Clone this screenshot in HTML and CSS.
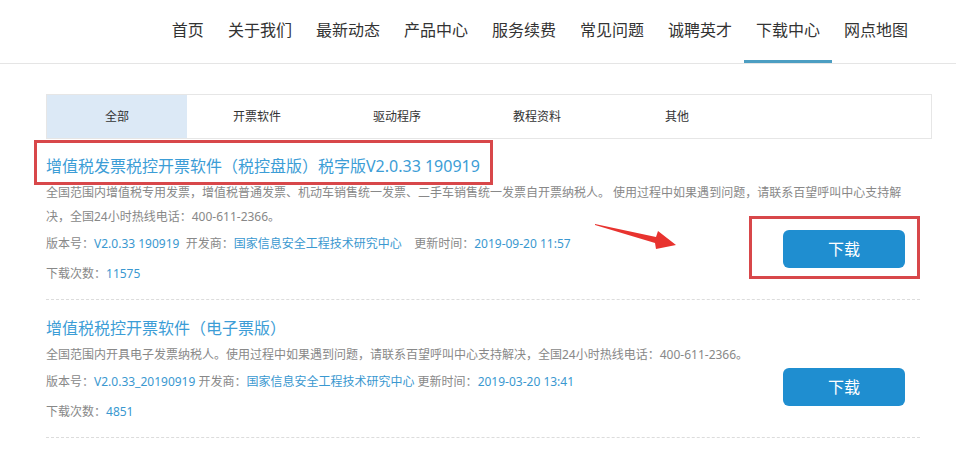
FILE: index.html
```html
<!DOCTYPE html>
<html lang="zh-CN">
<head>
    <meta charset="UTF-8">
    <meta name="viewport" content="width=device-width, initial-scale=1.0">
    <title>下载中心</title>
    <link rel="stylesheet" href="styles.css">
</head>
<body>
    <header class="top">
        <nav class="nav">
            <a class="nav-item">首页</a>
            <a class="nav-item">关于我们</a>
            <a class="nav-item">最新动态</a>
            <a class="nav-item">产品中心</a>
            <a class="nav-item">服务续费</a>
            <a class="nav-item">常见问题</a>
            <a class="nav-item">诚聘英才</a>
            <a class="nav-item active">下载中心</a>
            <a class="nav-item">网点地图</a>
        </nav>
    </header>

    <div class="container">
        <ul class="tabs">
            <li class="tab active">全部</li>
            <li class="tab">开票软件</li>
            <li class="tab">驱动程序</li>
            <li class="tab">教程资料</li>
            <li class="tab">其他</li>
        </ul>

        <div class="list">
            <div class="item">
                <h3 class="item-title">
                    <span class="title-text">增值税发票税控开票软件（税控盘版）税字版V2.0.33 190919<span class="mark mark-title"></span></span>
                </h3>
                <p class="desc">全国范围内增值税专用发票，增值税普通发票、机动车销售统一发票、二手车销售统一发票自开票纳税人。 使用过程中如果遇到问题，请联系百望呼叫中心支持解决，全国24小时热线电话：400-611-2366。</p>
                <div class="item-bottom">
                    <div class="meta">
                        <p class="meta-line">版本号：<em>V2.0.33 190919</em>&nbsp;&nbsp;开发商：<em>国家信息安全工程技术研究中心</em>&nbsp;&nbsp;&nbsp;&nbsp;更新时间：<em>2019-09-20 11:57</em></p>
                        <p class="meta-line count">下载次数：<em>11575</em></p>
                    </div>
                    <div class="action">
                        <a class="btn">下载</a>
                        <span class="mark mark-btn"></span>
                    </div>
                </div>
                <svg class="arrow" width="92" height="34" viewBox="0 0 92 34">
                    <polygon points="5,6 66,19 68,13 86,27 66,31 65,25 5,7" fill="#e8332f"/>
                </svg>
            </div>

            <div class="item">
                <h3 class="item-title">
                    <span class="title-text">增值税税控开票软件（电子票版）</span>
                </h3>
                <p class="desc">全国范围内开具电子发票纳税人。使用过程中如果遇到问题，请联系百望呼叫中心支持解决，全国24小时热线电话：400-611-2366。</p>
                <div class="item-bottom">
                    <div class="meta">
                        <p class="meta-line">版本号：<em>V2.0.33_20190919</em> 开发商：<em>国家信息安全工程技术研究中心</em> 更新时间：<em>2019-03-20 13:41</em></p>
                        <p class="meta-line count">下载次数：<em>4851</em></p>
                    </div>
                    <div class="action">
                        <a class="btn">下载</a>
                    </div>
                </div>
            </div>
        </div>
    </div>
</body>
</html>
```

FILE: styles.css
```css
* {
    margin: 0;
    padding: 0;
    box-sizing: border-box;
}
body {
    font-family: "Noto Sans", "Noto Sans CJK SC", sans-serif;
    background: #fff;
    color: #333;
}

/* header nav */
.top {
    border-bottom: 1px solid #e5e5e5;
}
.nav {
    display: flex;
    justify-content: flex-end;
    padding-right: 36px;
}
.nav-item {
    display: block;
    padding: 0 12px;
    font-size: 16px;
    line-height: 60px;
    color: #333;
    border-bottom: 3px solid transparent;
    cursor: pointer;
}
.nav-item.active {
    border-bottom-color: #4c9ec2;
}

.container {
    margin-left: 46px;
    width: 886px;
}

/* tabs */
.tabs {
    list-style: none;
    display: flex;
    margin-top: 30px;
    border: 1px solid #e6e6e6;
}
.tab {
    width: 140px;
    height: 43px;
    line-height: 43px;
    text-align: center;
    font-size: 12px;
    color: #333;
}
.tab.active {
    background: #dce9f6;
}

/* download list */
.list {
    margin-right: 12px;
}
.item {
    position: relative;
    padding-top: 12px;
    padding-bottom: 13px;
    border-bottom: 1px dashed #dcdcdc;
}
.item + .item {
    padding-top: 13px;
}
.item-title {
    font-size: 16px;
    font-weight: normal;
    line-height: 30px;
    color: #3c9dd6;
}
.title-text {
    position: relative;
    display: inline-block;
}
.desc {
    max-width: 862px;
    font-size: 12px;
    line-height: 24px;
    color: #888;
}
.item-bottom {
    display: flex;
    justify-content: space-between;
    align-items: flex-start;
    margin-top: 3px;
}
.meta-line {
    font-size: 12px;
    line-height: 24px;
    color: #888;
}
.meta-line em {
    font-style: normal;
    color: #3a98d0;
}
.meta-line.count {
    margin-top: 6px;
}
.action {
    position: relative;
    margin-top: -2px;
    margin-right: 15px;
}
.btn {
    display: block;
    width: 122px;
    height: 38px;
    line-height: 38px;
    text-align: center;
    font-size: 16px;
    color: #fff;
    background: #1f8ed0;
    border-radius: 6px;
    cursor: pointer;
}

/* red annotation marks */
.mark {
    position: absolute;
    border: 3px solid #d8474a;
    pointer-events: none;
}
.mark-title {
    top: -11px;
    bottom: -4px;
    left: -12px;
    right: -13px;
}
.mark-btn {
    top: -14px;
    bottom: -11px;
    left: -34px;
    right: -15px;
}
.arrow {
    position: absolute;
    left: 544px;
    top: 79px;
}
```
